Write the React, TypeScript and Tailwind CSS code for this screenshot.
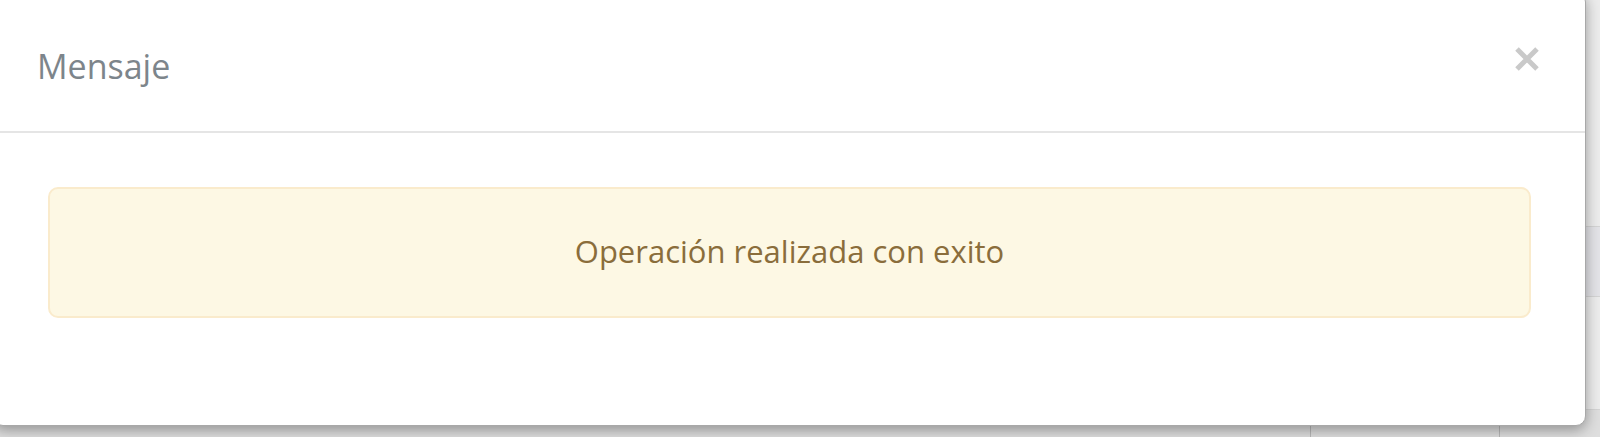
import React from "react";

function CloseIcon() {
  return (
    <svg width="28" height="26" viewBox="0 0 28 26" aria-hidden="true">
      <path d="M4 3 L24 23 M24 3 L4 23" stroke="#c9c9c9" strokeWidth="5" />
    </svg>
  );
}

// page content peeking out behind the dialog
function BackgroundTable() {
  return (
    <div className="flex h-full flex-col bg-[#ececec]">
      <div className="h-[227px] border-b border-[#d4d4d4]" />
      <div className="h-[70px] border-b border-[#d4d4d4] bg-[#e3e3e7]" />
      <div className="h-[113px] border-b border-[#d4d4d4]" />
      <div className="flex flex-1 bg-[#dedede]">
        <div className="w-[1311px] border-r border-[#b8b8b8]" />
        <div className="w-[189px] border-r border-[#b8b8b8]" />
        <div className="flex-1" />
      </div>
    </div>
  );
}

export default function App() {
  return (
    <div
      className="relative h-[437px] w-full overflow-hidden"
      style={{ fontFamily: '"Open Sans", "Noto Sans", sans-serif' }}
    >
      <BackgroundTable />

      {/* Modal */}
      <div className="absolute left-[-7px] top-[-8px] flex h-[434px] w-[1593px] flex-col rounded-[10px] border border-[#a8a8a8] bg-white shadow-[0_4px_14px_rgba(0,0,0,0.35)]">
        <div className="flex h-[140px] items-center justify-between border-b-2 border-[#e5e5e5] pl-[43px] pr-[44px] pt-[8px]">
          <h4 className="text-[34px] font-normal leading-none text-[#7d858b]">
            Mensaje
          </h4>
          <button type="button" className="mb-[14px] flex items-center">
            <CloseIcon />
          </button>
        </div>

        <div className="px-[54px] pt-[54px]">
          <div className="flex h-[131px] items-center justify-center rounded-[10px] border-2 border-[#faebcc] bg-[#fdf8e4] pb-[2px] text-[31px] text-[#8a6d3b]">
            Operación realizada con exito
          </div>
        </div>
      </div>
    </div>
  );
}
